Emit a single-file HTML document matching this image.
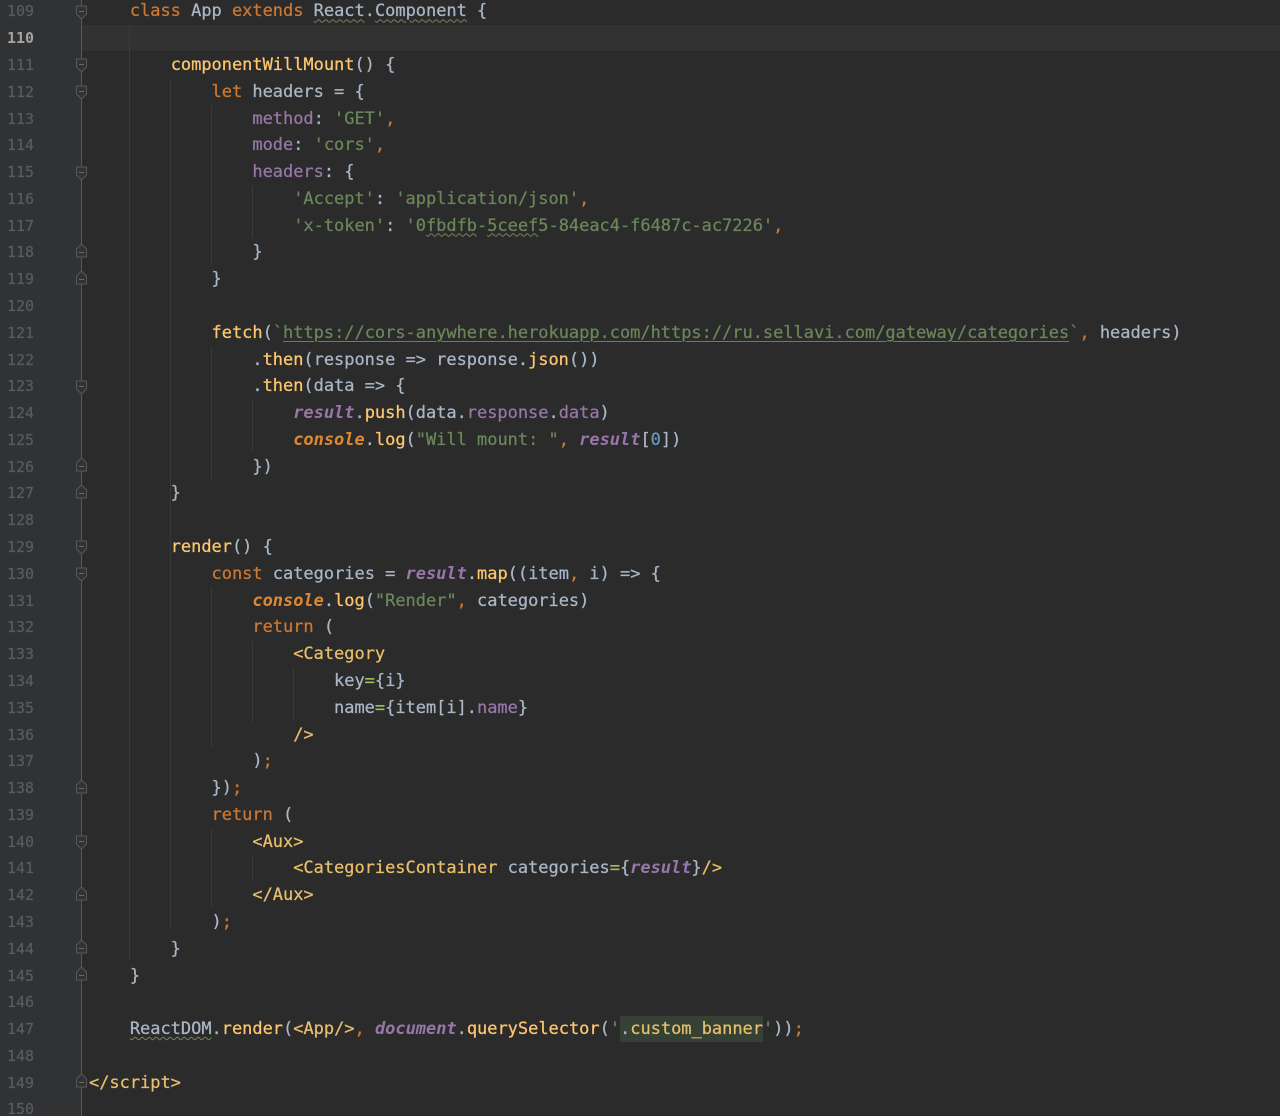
<!DOCTYPE html>
<html>
<head>
<meta charset="utf-8">
<style>
html,body{margin:0;padding:0;background:#2b2b2b;width:1280px;height:1116px;overflow:hidden}
#w{position:absolute;left:0;top:0;width:1280px;height:1116px;overflow:hidden;background:#2b2b2b}
#g{position:absolute;left:0;top:0;width:82px;height:1116px;background:#303234}
#cur{position:absolute;left:82px;top:24.5px;width:1198px;height:26.8px;background:#323232}
svg{position:absolute;left:0;top:0}
#n,#c{position:absolute;top:-1.6px;font-family:"DejaVu Sans Mono","Liberation Mono",monospace;line-height:26.78px;white-space:pre;filter:blur(.25px)}
#n{left:7px;font-size:15px;color:#585c60;-webkit-text-stroke:.2px}
#n b{color:#a4a3a3;font-weight:bold;-webkit-text-stroke:0}
#c{left:89px;font-size:17px;letter-spacing:-.025px;color:#a9b7c6;-webkit-text-stroke:.25px}
.k{color:#cc7832}.f{color:#ffc66d}.s{color:#6a8759}.p{color:#9876aa}.t{color:#e8bf6a}
.i{font-style:italic;font-weight:bold;-webkit-text-stroke:0}.o{color:#e0882f}.e{color:#a5c261}.m{color:#6897bb}
.w{text-decoration:underline wavy #77835c 1px;text-underline-offset:2px}
.u{text-decoration:underline solid #66739a 1px;text-underline-offset:3px}
.h{background:#344134;display:inline-block;height:26px;line-height:26px}
</style>
</head>
<body>
<div id="w">
<div id="g"></div>
<div id="cur"></div>
<svg width="1280" height="1116" viewBox="0 0 1280 1116" fill="none" stroke-width="1">
<g stroke="#3a3a3a">
<path d="M129.5 25V960M170.5 79V930M211.5 105V265M211.5 347V480M211.5 587V748M211.5 828V908M252.5 186V238M252.5 400V452M252.5 641V722M252.5 855V881M293.5 667V720"/>
</g>
<path d="M81.5 0V1116" stroke="#585858"/>
<g stroke="#585858" fill="#303234">
<path d="M76.5 6H86.5V14L81.500 19L76.500 14Z"/>
<path d="M76.5 59H86.5V67L81.500 72L76.500 67Z"/>
<path d="M76.5 86H86.5V94L81.500 99L76.500 94Z"/>
<path d="M76.5 167H86.5V175L81.500 180L76.500 175Z"/>
<path d="M76.5 381H86.5V389L81.500 394L76.500 389Z"/>
<path d="M76.5 541H86.5V549L81.500 554L76.500 549Z"/>
<path d="M76.5 568H86.5V576L81.500 581L76.500 576Z"/>
<path d="M76.5 836H86.500V844L81.500 849L76.500 844Z"/>
<path d="M81.500 244L86.500 249V257H76.500V249Z"/>
<path d="M81.500 271L86.500 276V284H76.500V276Z"/>
<path d="M81.500 458L86.500 463V471H76.500V463Z"/>
<path d="M81.500 485L86.500 490V498H76.500V490Z"/>
<path d="M81.500 780L86.500 785V793H76.500V785Z"/>
<path d="M81.500 887L86.500 892V900H76.500V892Z"/>
<path d="M81.500 940L86.500 945V953H76.500V945Z"/>
<path d="M81.500 967L86.500 972V980H76.500V972Z"/>
<path d="M81.500 1074L86.500 1079V1087H76.500V1079Z"/>
</g>
<g stroke="#6a6a6a">
<path d="M79 11.500H84M79 64.500H84M79 91.500H84M79 172.500H84M79 386.500H84M79 546.500H84M79 573.500H84M79 841.500H84M79 252.500H84M79 279.500H84M79 466.500H84M79 493.500H84M79 788.500H84M79 895.500H84M79 948.500H84M79 975.500H84M79 1082.500H84"/>
</g>
</svg>
<div id="n">109
<b>110</b>
111
112
113
114
115
116
117
118
119
120
121
122
123
124
125
126
127
128
129
130
131
132
133
134
135
136
137
138
139
140
141
142
143
144
145
146
147
148
149
150</div>
<div id="c">    <span class="k">class</span> App <span class="k">extends</span> <span class="w">React</span>.<span class="w">Component</span> {

        <span class="f">componentWillMount</span>() {
            <span class="k">let</span> headers = {
                <span class="p">method</span>: <span class="s">'GET'</span><span class="k">,</span>
                <span class="p">mode</span>: <span class="s">'cors'</span><span class="k">,</span>
                <span class="p">headers</span>: {
                    <span class="s">'Accept'</span>: <span class="s">'application/json'</span><span class="k">,</span>
                    <span class="s">'x-token'</span>: <span class="s">'0<span class="w">fbdfb</span>-<span class="w">5ceef</span>5-84eac4-f6487c-ac7226'</span><span class="k">,</span>
                }
            }

            <span class="f">fetch</span>(<span class="s">`<span class="u">https://cors-anywhere.herokuapp.com/https://ru.sellavi.com/gateway/categories</span>`</span><span class="k">,</span> headers)
                .<span class="f">then</span>(response =&gt; response.<span class="f">json</span>())
                .<span class="f">then</span>(data =&gt; {
                    <span class="p i">result</span>.<span class="f">push</span>(data.<span class="p">response</span>.<span class="p">data</span>)
                    <span class="o i">console</span>.<span class="f">log</span>(<span class="s">"Will mount: "</span><span class="k">,</span> <span class="p i">result</span>[<span class="m">0</span>])
                })
        }

        <span class="f">render</span>() {
            <span class="k">const</span> categories = <span class="p i">result</span>.<span class="f">map</span>((item<span class="k">,</span> i) =&gt; {
                <span class="o i">console</span>.<span class="f">log</span>(<span class="s">"Render"</span><span class="k">,</span> categories)
                <span class="k">return</span> (
                    <span class="t">&lt;Category</span>
                        key<span class="e">=</span>{i}
                        name<span class="e">=</span>{item[i].<span class="p">name</span>}
                    <span class="t">/&gt;</span>
                )<span class="k">;</span>
            })<span class="k">;</span>
            <span class="k">return</span> (
                <span class="t">&lt;Aux&gt;</span>
                    <span class="t">&lt;CategoriesContainer</span> categories<span class="e">=</span>{<span class="p i">result</span>}<span class="t">/&gt;</span>
                <span class="t">&lt;/Aux&gt;</span>
            )<span class="k">;</span>
        }
    }

    <span class="w">ReactDOM</span>.<span class="f">render</span>(<span class="t">&lt;App/&gt;</span><span class="k">,</span> <span class="p i">document</span>.<span class="f">querySelector</span>(<span class="s">'</span><span class="h">.<span class="t">custom_banner</span></span><span class="s">'</span>))<span class="k">;</span>

<span class="t">&lt;/script&gt;</span></div>
</div>
</body>
</html>
